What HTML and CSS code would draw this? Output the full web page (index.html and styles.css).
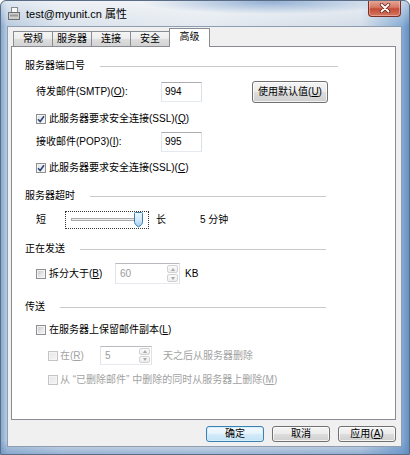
FILE: index.html
```html
<!DOCTYPE html>
<html lang="zh-CN">
<head>
<meta charset="utf-8">
<title>test@myunit.cn 属性</title>
<link rel="stylesheet" href="styles.css">
</head>
<body>
<div class="window">
  <header class="titlebar">
    <svg class="app-icon" width="12" height="13" viewBox="0 0 12 13">
      <rect x="3.5" y="0.5" width="6" height="5" fill="#f7f7f7" stroke="#8a8a8a"/>
      <rect x="0.5" y="5.5" width="11" height="7" fill="#cfcfcf" stroke="#6e6e6e"/>
      <rect x="2" y="7.5" width="8" height="2" fill="#9a9a9a"/>
    </svg>
    <span class="title">test@myunit.cn 属性</span>
    <div class="close">
      <svg width="12" height="10" viewBox="0 0 12 10">
        <path d="M2.5 1.5 L9.5 8.5 M9.5 1.5 L2.5 8.5" stroke="#6a2418" stroke-width="3.4" stroke-linecap="round"/>
        <path d="M2.5 1.5 L9.5 8.5 M9.5 1.5 L2.5 8.5" stroke="#ffffff" stroke-width="1.8" stroke-linecap="round"/>
      </svg>
    </div>
  </header>

  <div class="client">
    <nav class="tabs">
      <span class="tab">常规</span>
      <span class="tab">服务器</span>
      <span class="tab">连接</span>
      <span class="tab">安全</span>
      <span class="tab tab-active">高级</span>
    </nav>

    <div class="panel">
      <div class="group-head group-head-wide"><span>服务器端口号</span><i class="rule"></i></div>

      <div class="row row-field sp-9">
        <span class="field-label">待发邮件(SMTP)(<u>O</u>):</span>
        <span class="textbox">994</span>
        <span class="btn btn-defaults">使用默认值(<u>U</u>)</span>
      </div>

      <div class="row row-check sp-10">
        <span class="cb cb-checked"><svg width="8" height="8" viewBox="0 0 8 8"><path d="M1 4.2 L3.2 6.5 L7 1.2" fill="none" stroke="#2d4778" stroke-width="1.6"/></svg></span>
        <span>此服务器要求安全连接(SSL)(<u>Q</u>)</span>
      </div>

      <div class="row row-field sp-6">
        <span class="field-label">接收邮件(POP3)(<u>I</u>):</span>
        <span class="textbox">995</span>
      </div>

      <div class="row row-check sp-9">
        <span class="cb cb-checked"><svg width="8" height="8" viewBox="0 0 8 8"><path d="M1 4.2 L3.2 6.5 L7 1.2" fill="none" stroke="#2d4778" stroke-width="1.6"/></svg></span>
        <span>此服务器要求安全连接(SSL)(<u>C</u>)</span>
      </div>

      <div class="group-head sp-14"><span>服务器超时</span><i class="rule"></i></div>

      <div class="row row-slider sp-8">
        <span class="slider-min">短</span>
        <span class="slider">
          <svg width="82" height="16" viewBox="0 0 82 16">
            <defs>
              <linearGradient id="thumb" x1="0" y1="0" x2="0" y2="1">
                <stop offset="0" stop-color="#eef7fd"/>
                <stop offset="0.5" stop-color="#d2eafa"/>
                <stop offset="1" stop-color="#9ccaee"/>
              </linearGradient>
            </defs>
            <rect x="5.5" y="6.5" width="69" height="2" fill="#eceeee" stroke="#a9a9a9"/>
            <path d="M68.5 1.5 Q68.5 0.5 69.5 0.5 H75.5 Q76.5 0.5 76.5 1.5 V10.5 Q76.5 12.5 72.5 15 Q68.5 12.5 68.5 10.5 Z" fill="url(#thumb)" stroke="#3c7fb1"/>
          </svg>
        </span>
        <span class="slider-max">长</span>
        <span class="slider-value">5 分钟</span>
      </div>

      <div class="group-head sp-13"><span>正在发送</span><i class="rule"></i></div>

      <div class="row row-spin sp-7">
        <span class="cb"></span>
        <span class="split-label">拆分大于(<u>B</u>)</span>
        <span class="spin spin-wide">
          <span class="spin-value">60</span>
          <span class="spin-buttons"><span class="spin-btn"><i class="arrow-up"></i></span><span class="spin-btn"><i class="arrow-down"></i></span></span>
        </span>
        <span class="unit">KB</span>
      </div>

      <div class="group-head sp-16"><span>传送</span><i class="rule"></i></div>

      <div class="row row-check sp-9">
        <span class="cb"></span>
        <span>在服务器上保留邮件副本(<u>L</u>)</span>
      </div>

      <div class="row row-sub row-spin-s sp-9 disabled">
        <span class="cb cb-disabled"></span>
        <span class="days-label">在(<u>R</u>)</span>
        <span class="spin spin-narrow">
          <span class="spin-value">5</span>
          <span class="spin-buttons"><span class="spin-btn"><i class="arrow-up"></i></span><span class="spin-btn"><i class="arrow-down"></i></span></span>
        </span>
        <span class="days-after">天之后从服务器删除</span>
      </div>

      <div class="row row-sub row-check sp-8 disabled">
        <span class="cb cb-disabled"></span>
        <span>从 “已删除邮件” 中删除的同时从服务器上删除(<u>M</u>)</span>
      </div>
    </div>

    <div class="buttons">
      <span class="btn btn-default">确定</span>
      <span class="btn">取消</span>
      <span class="btn">应用(<u>A</u>)</span>
    </div>
  </div>
</div>
</body>
</html>
```

FILE: styles.css
```css
* { box-sizing: border-box; margin: 0; padding: 0; }

html, body { width: 410px; height: 455px; overflow: hidden; }

body {
  font-family: "Liberation Sans", "Noto Sans CJK SC", sans-serif;
  font-size: 10px;
  line-height: 14px;
  color: #000;
  background: #fff;
}

u { text-decoration: underline; text-underline-offset: 1px; }

.window {
  width: 410px;
  height: 455px;
  display: flex;
  flex-direction: column;
  border: 1px solid #5a6d84;
  border-radius: 6px 6px 0 0;
  overflow: hidden;
  background:
    radial-gradient(ellipse 130px 12px at 270px 1px, rgba(110, 150, 200, 0.7), rgba(110, 150, 200, 0)),
    linear-gradient(180deg, rgba(255, 255, 255, 0.55) 0, rgba(255, 255, 255, 0) 26px),
    linear-gradient(180deg, rgba(0, 0, 0, 0) 440px, rgba(90, 135, 190, 0.6) 455px),
    linear-gradient(90deg, #86a9cf 0, #b9cbe0 6px, #dae2eb 60px, #e3e9ef 50%, #d3dde8 360px, #86abd3 401px, #5f8dc1 409px);
}

/* ---------- title bar ---------- */
.titlebar {
  flex: none;
  height: 25px;
  display: flex;
  align-items: center;
  padding-left: 7px;
}

.app-icon { display: block; flex: none; }

.title {
  margin-left: 6px;
  font-size: 11px;
  line-height: 14px;
  color: #000;
}

.close {
  margin-left: auto;
  margin-right: 8px;
  margin-top: -1px;
  align-self: flex-start;
  width: 33px;
  height: 17px;
  border: 1px solid #7a2e24;
  border-top: none;
  border-radius: 0 0 4px 4px;
  background: linear-gradient(180deg, #e9aa9b 0, #d67a67 45%, #c44d38 55%, #d47660 100%);
  box-shadow: inset 0 0 0 1px rgba(255, 210, 200, 0.45);
  display: flex;
  align-items: center;
  justify-content: center;
}

/* ---------- client area ---------- */
.client {
  flex: 1;
  margin: 0 7px 7px 6px;
  border: 1px solid #8d9cae;
  background: #f0f0f0;
  display: flex;
  flex-direction: column;
  padding: 0 5px 4px 3px;
}

.tabs {
  flex: none;
  height: 19px;
  display: flex;
  align-items: flex-end;
  padding-left: 2px;
  position: relative;
  z-index: 1;
}

.tab {
  width: 40px;
  height: 15px;
  margin-right: -1px;
  border: 1px solid #898c95;
  border-bottom: none;
  background: linear-gradient(180deg, #f5f5f5 0, #ececec 50%, #dedede 51%, #d3d3d3 100%);
  text-align: center;
  line-height: 14px;
}

.tab-active {
  width: 41px;
  height: 19px;
  margin-bottom: -1px;
  background: #fff;
  line-height: 15px;
}

.panel {
  flex: 1;
  border: 1px solid #898c95;
  background: #fff;
  padding: 12px 0 0 13px;
}

/* ---------- group headers ---------- */
.group-head {
  display: flex;
  align-items: center;
  height: 14px;
  width: 301px;
}

.group-head-wide { width: 313px; }

.rule {
  flex: 1;
  height: 1px;
  margin-left: 15px;
  background: #c6cacd;
}

.sp-6 { margin-top: 6px; }
.sp-7 { margin-top: 7px; }
.sp-8 { margin-top: 8px; }
.sp-9 { margin-top: 9px; }
.sp-10 { margin-top: 10px; }
.sp-13 { margin-top: 13px; }
.sp-14 { margin-top: 14px; }
.sp-16 { margin-top: 16px; }

/* ---------- rows ---------- */
.row {
  display: flex;
  align-items: center;
  margin-left: 11px;
  white-space: nowrap;
}

.row-sub { margin-left: 23px; }
.row-field { height: 20px; }
.row-check { height: 14px; }
.row-slider { height: 18px; }
.row-spin { height: 21px; }
.row-spin-s { height: 19px; }

.disabled { color: #a2a2a2; }

.field-label { width: 125px; }

.textbox {
  width: 41px;
  height: 20px;
  border: 1px solid;
  border-color: #abadb3 #dbdfe6 #e3e9ef #e2e3ea;
  background: #fff;
  padding-left: 3px;
  line-height: 18px;
}

/* checkbox */
.cb {
  flex: none;
  width: 10px;
  height: 10px;
  margin-right: 3px;
  border: 1px solid #8f8f8f;
  background: linear-gradient(135deg, #c3c7cc 0, #e6e8ea 60%, #f7f7f7 100%);
  box-shadow: inset 0 0 0 1px #f4f4f4;
  display: flex;
  align-items: center;
  justify-content: center;
}

.cb-checked {
  background: linear-gradient(135deg, #dfe3e8 0, #f4f5f6 100%);
}

.cb-checked svg { display: block; }

.cb-disabled {
  border-color: #c4c4c4;
  background: linear-gradient(135deg, #e6e6e6 0, #f5f5f5 100%);
  margin-right: 2px;
}

/* slider */
.slider-min { width: 29px; }

.slider {
  width: 84px;
  height: 18px;
  border: 1px dotted #333;
  display: block;
}

.slider svg { display: block; }

.slider-max { margin-left: 7px; width: 10px; }

.slider-value { margin-left: 34px; }

/* spin boxes */
.split-label { width: 66px; }

.spin {
  display: flex;
  align-items: stretch;
  height: 100%;
  padding: 1px;
  border: 1px solid;
  border-color: #b8babf #dfe2e7 #e6eaee #e2e3ea;
  background: #fff;
}

.spin-wide { width: 65px; }
.spin-narrow { width: 52px; }

.spin-value {
  flex: 1;
  padding-left: 3px;
  color: #9a9a9a;
  display: flex;
  align-items: center;
}

.spin-buttons {
  width: 11px;
  display: flex;
  flex-direction: column;
  gap: 1px;
}

.spin-btn {
  flex: 1;
  border: 1px solid #d2d2d2;
  border-radius: 2px;
  background: linear-gradient(180deg, #fbfbfb, #ececec);
  display: flex;
  align-items: center;
  justify-content: center;
}

.arrow-up, .arrow-down {
  width: 0;
  height: 0;
  border-left: 2.5px solid transparent;
  border-right: 2.5px solid transparent;
}

.arrow-up { border-bottom: 3px solid #a8a8a8; }
.arrow-down { border-top: 3px solid #a8a8a8; }

.unit { margin-left: 5px; }

.days-label { width: 40px; }

.days-after { margin-left: 11px; }

/* ---------- buttons ---------- */
.btn {
  display: block;
  height: 16px;
  width: 58px;
  border: 1px solid #707070;
  border-radius: 3px;
  background: linear-gradient(180deg, #f4f4f4 0, #ebebeb 50%, #dddddd 51%, #cfcfcf 100%);
  box-shadow: inset 0 0 0 1px rgba(255, 255, 255, 0.75);
  text-align: center;
  line-height: 14px;
  color: #000;
}

.btn-defaults {
  width: 76px;
  height: 22px;
  line-height: 20px;
  margin-left: 50px;
}

.buttons {
  flex: none;
  height: 16px;
  margin-top: 6px;
  display: flex;
  justify-content: flex-end;
  gap: 8px;
}

.btn-default {
  border-color: #3c7fb1;
  background: linear-gradient(180deg, #f2f9fe 0, #e5f3fc 50%, #d4ebf9 51%, #c3e2f6 100%);
  box-shadow: inset 0 0 0 1px #d4effc;
}
```
